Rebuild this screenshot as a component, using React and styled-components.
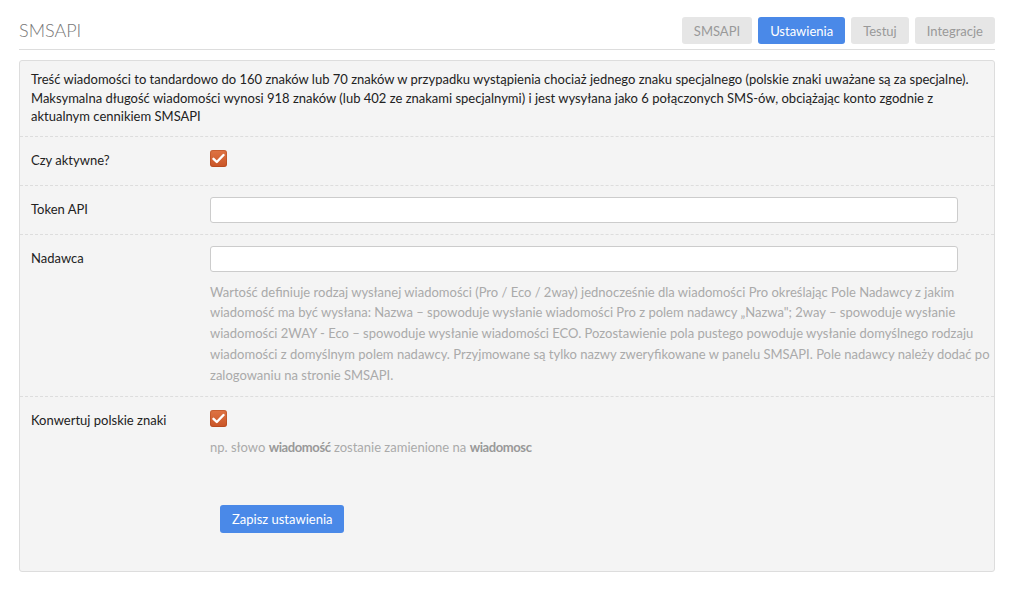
import React from "react";
import styled, { createGlobalStyle } from "styled-components";

const Global = createGlobalStyle`
  html, body { margin: 0; padding: 0; background: #fff; }
  body { font-family: Lato, "Open Sans", sans-serif; font-size: 13px; color: #222; }
  * { box-sizing: border-box; }
`;

const Page = styled.div`
  width: 976px;
  margin-left: 19px;
  padding-top: 17px;
`;

const Header = styled.header`
  display: flex;
  align-items: center;
  justify-content: space-between;
  padding-bottom: 5px;
  border-bottom: 1px solid #ddd;
`;

const Title = styled.h1`
  margin: 0;
  font-size: 18px;
  font-weight: 300;
  color: #777;
  line-height: 27px;
`;

const Tabs = styled.nav`
  display: flex;
  gap: 6px;
`;

const Tab = styled.a`
  display: inline-flex;
  align-items: center;
  height: 27px;
  padding: 0 12px;
  border-radius: 3px;
  font-size: 13px;
  text-decoration: none;
  background: ${(p) => (p.$active ? "#4a89e8" : "#e6e6e6")};
  color: ${(p) => (p.$active ? "#fff" : "#999")};
`;

const Panel = styled.section`
  margin-top: 10px;
  background: #f4f4f4;
  border: 1px solid #ddd;
  border-radius: 3px;
`;

const Intro = styled.p`
  margin: 0;
  padding: 9px 11px 10px;
  line-height: 18.5px;
  color: #222;
  border-bottom: 1px dashed #ddd;
`;

const Row = styled.div`
  display: grid;
  grid-template-columns: 179px 1fr;
  padding: 11px 11px 11px 11px;
  border-bottom: ${(p) => (p.$last ? "none" : "1px dashed #ddd")};
`;

const Label = styled.label`
  line-height: 24px;
  color: #222;
`;

const Control = styled.div`
  display: flex;
  flex-direction: column;
  align-items: flex-start;
`;

const Input = styled.input`
  display: block;
  width: 748px;
  height: 26px;
  margin: 0;
  border: 1px solid #ccc;
  border-radius: 3px;
  background: #fff;
  font: inherit;
  padding: 0 8px;
  outline: none;
`;

const CheckWrap = styled.div`
  height: 26px;
  padding-top: 2px;
`;

const Check = styled.span`
  width: 17px;
  height: 17px;
  border-radius: 3px;
  background: linear-gradient(#df7444, #c95426);
  box-shadow: inset 0 0 0 1px rgba(150, 50, 10, 0.3);
  display: flex;
  align-items: center;
  justify-content: center;
`;

const Help = styled.p`
  margin: ${(p) => (p.$tight ? "3px" : "10px")} 0 0 0;
  line-height: 20.75px;
  color: #aaa;
  width: 790px;
  b { color: #999; font-weight: 700; letter-spacing: -0.4px; }
`;

const Actions = styled.div`
  padding: 36px 0 38px 200px;
`;

const Button = styled.button`
  display: block;
  height: 28px;
  padding: 0 12px;
  border: 0;
  border-radius: 3px;
  background: #4a89e8;
  color: #fff;
  font: inherit;
  font-size: 13px;
`;

function Checkbox() {
  return (
    <CheckWrap>
      <Check>
        <svg width="13" height="11" viewBox="0 0 13 11">
          <path d="M1.5 5.8 L4.8 9 L11.5 2" fill="none" stroke="#fff" strokeWidth="2.4" strokeLinecap="round" strokeLinejoin="round" />
        </svg>
      </Check>
    </CheckWrap>
  );
}

export default function App() {
  return (
    <>
      <Global />
      <Page>
        <Header>
          <Title>SMSAPI</Title>
          <Tabs>
            <Tab>SMSAPI</Tab>
            <Tab $active>Ustawienia</Tab>
            <Tab>Testuj</Tab>
            <Tab>Integracje</Tab>
          </Tabs>
        </Header>
        <Panel>
          <Intro>
            Treść wiadomości to tandardowo do 160 znaków lub 70 znaków w przypadku wystąpienia chociaż jednego znaku specjalnego (polskie znaki uważane są za specjalne). Maksymalna długość wiadomości wynosi 918 znaków (lub 402 ze znakami specjalnymi) i jest wysyłana jako 6 połączonych SMS-ów, obciążając konto zgodnie z aktualnym cennikiem SMSAPI
          </Intro>
          <Row>
            <Label>Czy aktywne?</Label>
            <Control>
              <Checkbox />
            </Control>
          </Row>
          <Row>
            <Label>Token API</Label>
            <Control>
              <Input />
            </Control>
          </Row>
          <Row>
            <Label>Nadawca</Label>
            <Control>
              <Input />
              <Help>
                Wartość definiuje rodzaj wysłanej wiadomości (Pro / Eco / 2way) jednocześnie dla wiadomości Pro określając Pole Nadawcy z jakim wiadomość ma być wysłana: Nazwa – spowoduje wysłanie wiadomości Pro z polem nadawcy „Nazwa"; 2way – spowoduje wysłanie wiadomości 2WAY - Eco – spowoduje wysłanie wiadomości ECO. Pozostawienie pola pustego powoduje wysłanie domyślnego rodzaju wiadomości z domyślnym polem nadawcy. Przyjmowane są tylko nazwy zweryfikowane w panelu SMSAPI. Pole nadawcy należy dodać po zalogowaniu na stronie SMSAPI.
              </Help>
            </Control>
          </Row>
          <Row $last>
            <Label>Konwertuj polskie znaki</Label>
            <Control>
              <Checkbox />
              <Help $tight>
                np. słowo <b>wiadomość</b> zostanie zamienione na <b>wiadomosc</b>
              </Help>
            </Control>
          </Row>
          <Actions>
            <Button>Zapisz ustawienia</Button>
          </Actions>
        </Panel>
      </Page>
    </>
  );
}
